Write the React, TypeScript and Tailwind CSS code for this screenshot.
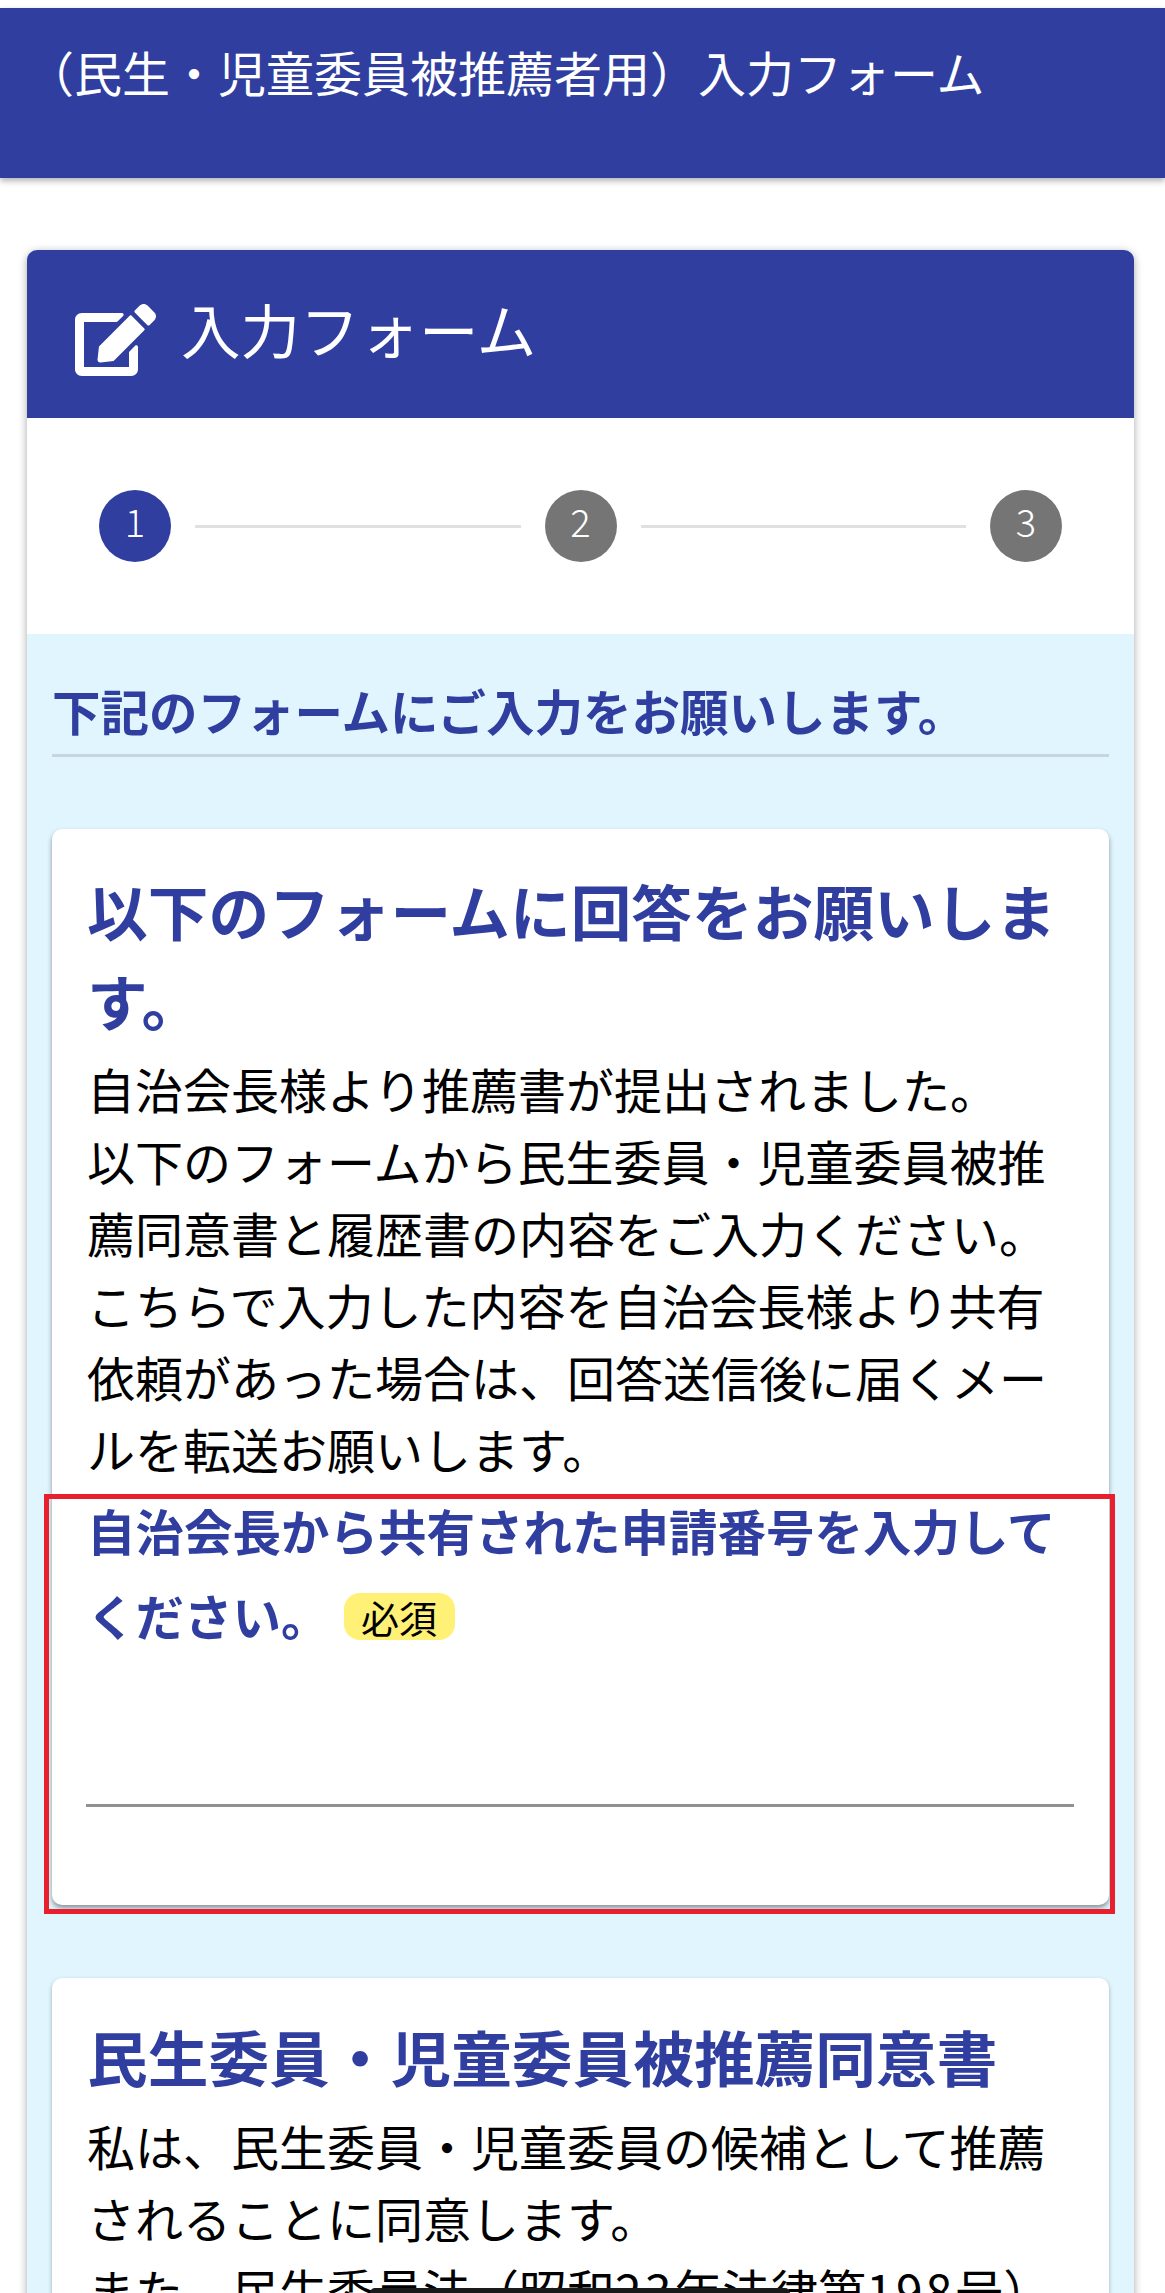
import { FaEdit } from "react-icons/fa";

const font = "font-['Noto_Sans_CJK_JP','Noto_Sans',sans-serif]";

function Step({ n, active }: { n: number; active?: boolean }) {
  return (
    <div
      className={`w-[72px] h-[72px] shrink-0 rounded-full flex items-center justify-center pb-[11px] text-white text-[38px] font-light ${
        active ? "bg-[#303f9f]" : "bg-[#757575]"
      }`}
    >
      {n}
    </div>
  );
}

export default function App() {
  return (
    <div className={`${font} relative h-[2293px] overflow-hidden bg-white pt-2 text-black`}>
      {/* App bar */}
      <header className="h-[170px] bg-[#303f9f] pl-[26px] pt-[31px] shadow-[0_3px_6px_rgba(0,0,0,0.3)]">
        <h1 className="text-[48px] leading-[64px] font-normal text-white whitespace-nowrap">
          （民生・児童委員被推薦者用）入力フォーム
        </h1>
      </header>

      <main className="mx-[27px] mt-[72px] w-[1107px] rounded-t-[10px] shadow-[0_2px_8px_rgba(0,0,0,0.35)]">
        {/* Card header */}
        <div className="h-[168px] rounded-t-[10px] bg-[#303f9f] flex items-center pl-[48px]">
          <FaEdit className="w-[81px] h-[72px] text-white mt-[12px]" />
          <span className="ml-[25px] -mt-[10px] text-[59.5px] font-normal leading-none text-white">入力フォーム</span>
        </div>

        {/* Stepper */}
        <div className="h-[216px] rounded-t-[10px] bg-white flex items-center pl-[72px] pr-[72px]">
          <Step n={1} active />
          <div className="mx-6 h-[3px] flex-1 bg-[#e0e0e0]" />
          <Step n={2} />
          <div className="mx-6 h-[3px] flex-1 bg-[#e0e0e0]" />
          <Step n={3} />
        </div>

        <div className="bg-[#e1f5fe] px-[25px] pt-[40px] pb-8">
          <h2 className="border-b-[3px] border-[#c4d6e0] pb-[8px] text-[48.5px] leading-[72px] font-bold text-[#303f9f] whitespace-nowrap">
            下記のフォームにご入力をお願いします。
          </h2>

          {/* First form card */}
          <section className="mt-[72px] h-[1076px] rounded-[10px] bg-white pl-[35px] pr-[36px] pt-[36px] shadow-[0_3px_5px_rgba(0,0,0,0.4)]">
            <h3 className="mb-[7px] text-[60.7px] leading-[90px] font-bold text-[#303f9f]">以下のフォームに回答をお願いします。</h3>
            <p className="text-[48px] leading-[72px]">
              自治会長様より推薦書が提出されました。
              <br />
              以下のフォームから民生委員・児童委員被推薦同意書と履歴書の内容をご入力ください。
              <br />
              こちらで入力した内容を自治会長様より共有依頼があった場合は、回答送信後に届くメールを転送お願いします。
            </p>
            <label className="block mt-[4px] text-[48.5px] leading-[85px] font-bold text-[#303f9f]">
              自治会長から共有された申請番号を入力してください。
              <span className="ml-[14px] inline-block h-[47px] w-[111px] rounded-[16px] bg-[#fff176] text-center align-[3px] text-[38px] leading-[47px] font-normal text-black">
                必須
              </span>
            </label>
            <div className="mt-[146px] -mx-[1px] h-[3px] bg-[#919191]" />
          </section>

          {/* Second form card */}
          <section className="mt-[73px] rounded-[10px] bg-white pl-[35px] pr-[36px] pt-[33px] pb-10 shadow-[0_2px_4px_rgba(0,0,0,0.3)]">
            <h3 className="mb-[8px] text-[60.7px] leading-[90px] font-bold text-[#303f9f]">民生委員・児童委員被推薦同意書</h3>
            <p className="text-[48px] leading-[72px]">
              私は、民生委員・児童委員の候補として推薦されることに同意します。
              <br />
              また、民生委員法（昭和<span className="tracking-[3px]">23</span>年法律第<span className="tracking-[3px]">198</span>号）
            </p>
          </section>
        </div>
      </main>

      {/* Annotation box over the screenshot */}
      <div className="absolute left-[44px] top-[1494px] h-[420px] w-[1071px] border-[5px] border-[#e8202e]" />
      {/* Home indicator */}
      <div className="absolute left-[370px] top-[2288px] h-[10px] w-[420px] rounded-full bg-[#1a1a1a]" />
    </div>
  );
}
